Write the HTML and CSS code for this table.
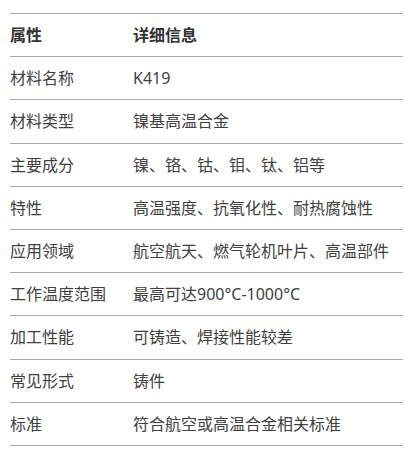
FILE: index.html
```html
<!DOCTYPE html>
<html lang="zh">
<head>
<meta charset="utf-8">
<title>K419</title>
<link rel="stylesheet" href="styles.css">
</head>
<body>
<div class="wrap">
<table class="spec">
<thead>
<tr><th class="k">属性</th><th>详细信息</th></tr>
</thead>
<tbody>
<tr><td class="k">材料名称</td><td>K419</td></tr>
<tr><td class="k">材料类型</td><td>镍基高温合金</td></tr>
<tr><td class="k">主要成分</td><td>镍、铬、钴、钼、钛、铝等</td></tr>
<tr><td class="k">特性</td><td>高温强度、抗氧化性、耐热腐蚀性</td></tr>
<tr><td class="k">应用领域</td><td>航空航天、燃气轮机叶片、高温部件</td></tr>
<tr><td class="k">工作温度范围</td><td>最高可达900°C-1000°C</td></tr>
<tr><td class="k">加工性能</td><td>可铸造、焊接性能较差</td></tr>
<tr><td class="k">常见形式</td><td>铸件</td></tr>
<tr><td class="k">标准</td><td>符合航空或高温合金相关标准</td></tr>
</tbody>
</table>
</div>
</body>
</html>
```
FILE: styles.css
```css
html, body {
  margin: 0;
  padding: 0;
  background: #fff;
}
.wrap {
  padding: 13px 17px 0 10px;
}
.spec {
  width: 393px;
  border-collapse: collapse;
  font-family: "Noto Sans", "Noto Sans CJK SC", sans-serif;
  font-size: 16px;
  color: #404040;
}
.spec th, .spec td {
  text-align: left;
  padding: 9px 0;
  line-height: 24.2px;
  border-top: 1px solid #a8a8a8;
  border-bottom: 1px solid #a8a8a8;
  vertical-align: middle;
}
.spec th {
  font-weight: 700;
  color: #333;
}
.spec .k {
  width: 123px;
}
```
